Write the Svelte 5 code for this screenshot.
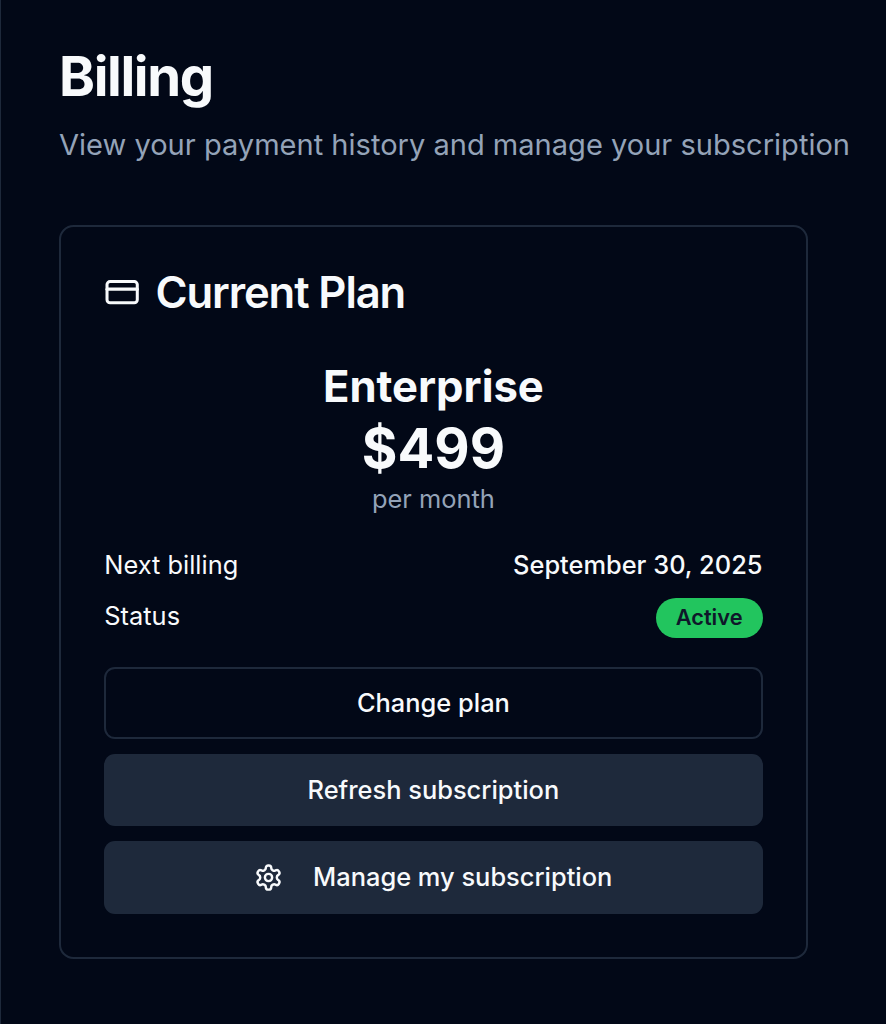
<script>
    let plan = {
        name: "Enterprise",
        price: 499,
        period: "per month",
        nextBilling: "September 30, 2025",
        status: "Active",
    };
</script>

<main class="page">
    <header class="entete">
        <h1>Billing</h1>
        <p>View your payment history and manage your subscription</p>
    </header>

    <section class="card">
        <h2 class="cardTitle">
            <svg class="iconCard" viewBox="0 0 24 24">
                <rect width="20" height="14" x="2" y="5" rx="2" />
                <line x1="2" x2="22" y1="10" y2="10" />
            </svg>
            Current Plan
        </h2>

        <div class="content">
            <div class="plan">
                <h3>{plan.name}</h3>
                <p class="price">${plan.price}</p>
                <p class="period">{plan.period}</p>
            </div>

            <div class="details">
                <div class="row">
                    <span>Next billing</span>
                    <span class="value">{plan.nextBilling}</span>
                </div>
                <div class="row">
                    <span>Status</span>
                    <span class="badge">{plan.status}</span>
                </div>
            </div>

            <!-- Actions -->
            <div class="actions">
                <button class="btn outline">Change plan</button>
                <button class="btn">Refresh subscription</button>
                <button class="btn">
                    <svg class="iconGear" viewBox="0 0 24 24">
                        <path
                            d="M12.22 2h-.44a2 2 0 0 0-2 2v.18a2 2 0 0 1-1 1.73l-.43.25a2 2 0 0 1-2 0l-.15-.08a2 2 0 0 0-2.73.73l-.22.38a2 2 0 0 0 .73 2.73l.15.1a2 2 0 0 1 1 1.72v.51a2 2 0 0 1-1 1.74l-.15.09a2 2 0 0 0-.73 2.73l.22.38a2 2 0 0 0 2.73.73l.15-.08a2 2 0 0 1 2 0l.43.25a2 2 0 0 1 1 1.73V20a2 2 0 0 0 2 2h.44a2 2 0 0 0 2-2v-.18a2 2 0 0 1 1-1.73l.43-.25a2 2 0 0 1 2 0l.15.08a2 2 0 0 0 2.73-.73l.22-.39a2 2 0 0 0-.73-2.73l-.15-.08a2 2 0 0 1-1-1.74v-.5a2 2 0 0 1 1-1.74l.15-.09a2 2 0 0 0 .73-2.73l-.22-.38a2 2 0 0 0-2.73-.73l-.15.08a2 2 0 0 1-2 0l-.43-.25a2 2 0 0 1-1-1.73V4a2 2 0 0 0-2-2z"
                        />
                        <circle cx="12" cy="12" r="3" />
                    </svg>
                    Manage my subscription
                </button>
            </div>
        </div>
    </section>
</main>

<style>
    :global(html) {
        font-size: 29.06px;
    }
    :global(body) {
        background: #020817;
    }
    .page {
        box-sizing: border-box;
        min-height: 1024px;
        padding: 43.6px 78px 0 58px;
        border-left: 1px solid #1e293b;
        font-family: Inter, sans-serif;
        color: #f8fafc;
        overflow: hidden;
    }
    h1,
    h2,
    h3,
    p {
        margin: 0;
    }
    .entete {
        margin-bottom: 2.01rem;
        white-space: nowrap;
    }
    h1 {
        font-size: 1.875rem;
        line-height: 2.25rem;
        font-weight: 700;
        letter-spacing: -0.025em;
    }
    .entete p {
        margin-top: 0.485rem;
        line-height: 1.5rem;
        color: #94a3b8;
    }
    .card {
        padding: 43.7px 43.5px 43px 43.3px;
        border: 2px solid #1e293b;
        border-radius: 0.5rem;
    }
    .cardTitle {
        display: flex;
        align-items: center;
        gap: 0.51rem;
        margin-bottom: 1.5rem;
        font-size: 1.5rem;
        line-height: 1;
        font-weight: 600;
        letter-spacing: -0.025em;
    }
    svg {
        flex-shrink: 0;
        fill: none;
        stroke: currentColor;
        stroke-width: 2;
        stroke-linecap: round;
        stroke-linejoin: round;
    }
    .iconCard {
        width: 1.25rem;
        height: 1.25rem;
    }
    .iconGear {
        width: 1rem;
        height: 1rem;
        margin-right: 0.52rem;
    }
    .content {
        display: flex;
        flex-direction: column;
        gap: 1rem;
        font-size: 0.875rem;
        line-height: 1.25rem;
    }
    .plan {
        text-align: center;
    }
    h3 {
        font-size: 1.5rem;
        line-height: 2rem;
        font-weight: 700;
    }
    .price {
        font-size: 1.875rem;
        line-height: 2.25rem;
        font-weight: 700;
    }
    .period {
        color: #94a3b8;
    }
    .details,
    .actions {
        display: flex;
        flex-direction: column;
        gap: 0.5rem;
    }
    .row {
        display: flex;
        justify-content: space-between;
    }
    .value {
        font-weight: 500;
    }
    .badge {
        padding: 0.1875rem 0.6875rem;
        border-radius: 999px;
        background: #22c55e;
        color: #0f172a;
        font-size: 0.75rem;
        line-height: 1rem;
        font-weight: 600;
    }
    .btn {
        display: flex;
        align-items: center;
        justify-content: center;
        gap: 0.5rem;
        box-sizing: border-box;
        height: 2.5rem;
        border: none;
        border-radius: 0.375rem;
        background: #1e293b;
        color: inherit;
        font: inherit;
        font-weight: 500;
    }
    .outline {
        border: 2px solid #1e293b;
        background: #020817;
    }
</style>
